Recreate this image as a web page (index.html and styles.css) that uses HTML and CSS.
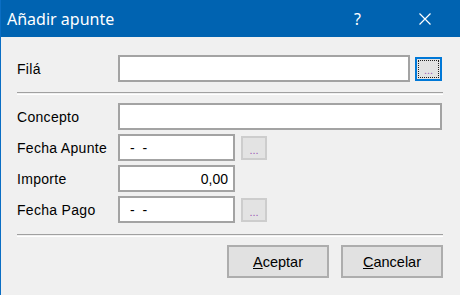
FILE: index.html
```html
<!DOCTYPE html>
<html lang="es">
<head>
  <meta charset="UTF-8" />
  <title>Añadir apunte</title>
  <link rel="stylesheet" href="styles.css">
</head>
<body>
  <div class="window">
    <div class="titlebar">
      <span class="title">Añadir apunte</span>
      <span class="help">?</span>
      <span class="close">
        <svg width="12" height="12" viewBox="0 0 12 12"><path d="M0.5 0.5 L11.5 11.5 M11.5 0.5 L0.5 11.5" stroke="#fff" stroke-width="1.2" fill="none"/></svg>
      </span>
    </div>

    <div class="client">
      <div class="row first">
        <label>Filá</label>
        <input type="text" class="field wide" />
        <button class="dots focused"><span>...</span></button>
      </div>

      <div class="sep"></div>

      <div class="rows">
        <div class="row">
          <label>Concepto</label>
          <input type="text" class="field full" />
        </div>
        <div class="row">
          <label>Fecha Apunte</label>
          <input type="text" class="field short date" value="-  -" />
          <button class="dots">...</button>
        </div>
        <div class="row">
          <label>Importe</label>
          <input type="text" class="field short num" value="0,00" />
        </div>
        <div class="row">
          <label>Fecha Pago</label>
          <input type="text" class="field short date" value="-  -" />
          <button class="dots">...</button>
        </div>
      </div>

      <div class="sep bottom"></div>

      <div class="actions">
        <button class="btn"><u>A</u>ceptar</button>
        <button class="btn"><u>C</u>ancelar</button>
      </div>
    </div>
  </div>
</body>
</html>
```

FILE: styles.css
```css
body { margin: 0; font-family: "Liberation Sans", Arial, sans-serif; }
.window { width: 459px; height: 295px; border-left: 1px solid #0a6ec4; background: #f0f0f0; }

.titlebar { height: 37px; background: #0063b1; color: #fff; display: flex; align-items: center; font-family: "Noto Sans", "Open Sans", sans-serif; font-size: 16px; }
.title { padding-left: 6px; flex: 1; }
.help { width: 65px; text-align: left; }
.close { width: 41px; display: flex; align-items: center; }

.client { padding: 18px 17px 0 16px; font-size: 14px; letter-spacing: 0.3px; color: #000; }
.row { display: flex; align-items: center; height: 27px; }
.row label { width: 101px; }
.rows { display: flex; flex-direction: column; gap: 4px; }

.field { box-sizing: border-box; height: 27px; border: 2px solid #a3a3a3; background: #fff; font: inherit; padding: 0 10px; outline: none; white-space: pre; }
.wide { width: 292px; }
.full { width: 324px; }
.short { width: 117px; }
.date { padding-left: 10px; }
.num { text-align: right; padding-right: 5px; }

.dots { box-sizing: border-box; width: 26px; height: 24px; margin-left: 6px; border: 2px solid #cdcdcd; background: #e3e3e3; color: #9a5ab4; font: 11px "Liberation Sans", sans-serif; padding: 5px 0 0; }
.dots.focused { width: 27px; margin-left: 5px; border: 2px solid #0078d7; padding: 1px; display: flex; }
.dots.focused span { flex: 1; border: 1px dotted #222; display: flex; align-items: flex-end; justify-content: center; line-height: 13px; }

.sep { height: 1px; border-top: 1px solid #a0a0a0; border-bottom: 1px solid #fff; margin: 10px 0 8px; }
.sep.bottom { margin: 11px 0 8px; }

.actions { display: flex; justify-content: flex-end; gap: 12px; }
.btn { width: 102px; height: 33px; border: 2px solid #adadad; background: #e1e1e1; font: 14.5px "Liberation Sans", sans-serif; color: #000; }
```
